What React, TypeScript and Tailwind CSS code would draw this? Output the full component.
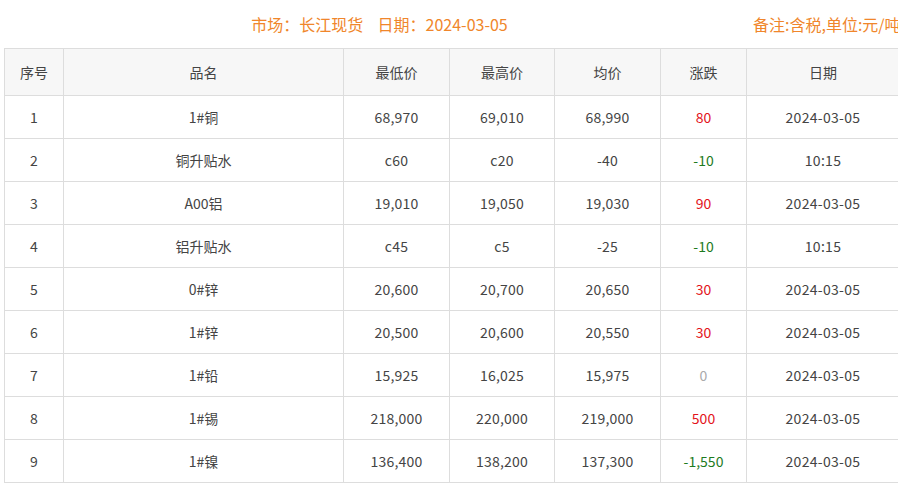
import React from 'react';

interface PriceRow {
  id: number;
  name: string;
  low: string;
  high: string;
  avg: string;
  change: string;
  date: string;
}

const rows: PriceRow[] = [
  { id: 1, name: '1#铜', low: '68,970', high: '69,010', avg: '68,990', change: '80', date: '2024-03-05' },
  { id: 2, name: '铜升贴水', low: 'c60', high: 'c20', avg: '-40', change: '-10', date: '10:15' },
  { id: 3, name: 'A00铝', low: '19,010', high: '19,050', avg: '19,030', change: '90', date: '2024-03-05' },
  { id: 4, name: '铝升贴水', low: 'c45', high: 'c5', avg: '-25', change: '-10', date: '10:15' },
  { id: 5, name: '0#锌', low: '20,600', high: '20,700', avg: '20,650', change: '30', date: '2024-03-05' },
  { id: 6, name: '1#锌', low: '20,500', high: '20,600', avg: '20,550', change: '30', date: '2024-03-05' },
  { id: 7, name: '1#铅', low: '15,925', high: '16,025', avg: '15,975', change: '0', date: '2024-03-05' },
  { id: 8, name: '1#锡', low: '218,000', high: '220,000', avg: '219,000', change: '500', date: '2024-03-05' },
  { id: 9, name: '1#镍', low: '136,400', high: '138,200', avg: '137,300', change: '-1,550', date: '2024-03-05' },
];

// colour of the change column depends on the sign
const changeColor = (v: string) => {
  if (v.startsWith('-')) return 'text-[#1e7b1e]';
  if (v === '0') return 'text-[#aaaaaa]';
  return 'text-[#e3131b]';
};

const headers = ['序号', '品名', '最低价', '最高价', '均价', '涨跌', '日期'];
const widths = ['w-[59px]', 'w-[280px]', 'w-[106px]', 'w-[105px]', 'w-[106px]', 'w-[86px]', 'w-[153px]'];

export default function App() {
  return (
    <div className="w-full overflow-hidden bg-white">
      <div
        className="w-[920px] text-[#444]"
        style={{ fontFamily: '"Microsoft YaHei", "Noto Sans CJK SC", "Noto Sans", sans-serif' }}
      >
        <div className="flex h-[48px] items-center text-[16px] text-[#f0862b]">
          <div className="w-[753px] pl-[6px] text-center whitespace-nowrap">
            市场：长江现货&nbsp;&nbsp;&nbsp;&nbsp;日期：2024-03-05
          </div>
          <div className="whitespace-nowrap">备注:含税,单位:元/吨</div>
        </div>

        <table className="ml-[4px] w-[895px] table-fixed border-collapse text-[14px]">
          <colgroup>
            {widths.map((w, i) => (
              <col key={i} className={w} />
            ))}
          </colgroup>
          <thead>
            <tr className="h-[47px] bg-[#f7f7f7]">
              {headers.map((h) => (
                <th key={h} className="border border-[#dddddd] font-normal text-center">
                  {h}
                </th>
              ))}
            </tr>
          </thead>
          <tbody>
            {rows.map((r) => (
              <tr key={r.id} className="h-[43px]">
                <td className="border border-[#dddddd] text-center">{r.id}</td>
                <td className="border border-[#dddddd] text-center">{r.name}</td>
                <td className="border border-[#dddddd] text-center tracking-[0.2px]">{r.low}</td>
                <td className="border border-[#dddddd] text-center tracking-[0.2px]">{r.high}</td>
                <td className="border border-[#dddddd] text-center tracking-[0.2px]">{r.avg}</td>
                <td className={`border border-[#dddddd] text-center ${changeColor(r.change)}`}>{r.change}</td>
                <td className="border border-[#dddddd] text-center tracking-[0.3px]">{r.date}</td>
              </tr>
            ))}
          </tbody>
        </table>
      </div>
    </div>
  );
}
